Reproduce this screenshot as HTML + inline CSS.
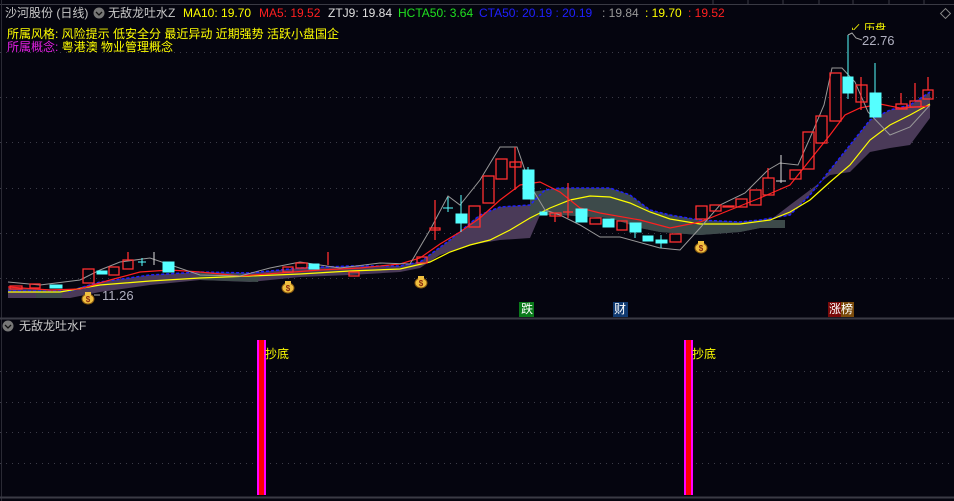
<!DOCTYPE html>
<html><head><meta charset="utf-8"><style>
html,body{margin:0;padding:0;background:#05050f;width:954px;height:501px;overflow:hidden}
.t{position:absolute;font-family:"Liberation Sans","Noto Sans CJK SC",sans-serif;font-size:12px;white-space:nowrap;line-height:15px}
</style></head><body>
<svg width="954" height="501" style="position:absolute;left:0;top:0" xmlns="http://www.w3.org/2000/svg">
<rect width="954" height="501" fill="#05050f"/>
<line x1="0" y1="4.5" x2="954" y2="4.5" stroke="#3a3a44"/>
<g stroke="#3a3a44"><line x1="713" y1="0" x2="713" y2="4"/><line x1="748" y1="0" x2="748" y2="4"/><line x1="783" y1="0" x2="783" y2="4"/><line x1="819" y1="0" x2="819" y2="4"/><line x1="853" y1="0" x2="853" y2="4"/><line x1="889" y1="0" x2="889" y2="4"/><line x1="924" y1="0" x2="924" y2="4"/></g>
<line x1="1.5" y1="0" x2="1.5" y2="501" stroke="#2a2a34"/>
<g stroke="#3c3c48" stroke-dasharray="1,5">
<line x1="0" y1="52.5" x2="954" y2="52.5"/><line x1="0" y1="97.5" x2="954" y2="97.5"/><line x1="0" y1="142.5" x2="954" y2="142.5"/><line x1="0" y1="188.5" x2="954" y2="188.5"/><line x1="0" y1="233.5" x2="954" y2="233.5"/><line x1="0" y1="278.5" x2="954" y2="278.5"/>
<line x1="0" y1="371.5" x2="954" y2="371.5"/><line x1="0" y1="402.5" x2="954" y2="402.5"/><line x1="0" y1="432.5" x2="954" y2="432.5"/><line x1="0" y1="463.5" x2="954" y2="463.5"/>
</g>
<line x1="0" y1="318.5" x2="954" y2="318.5" stroke="#3a3a44" stroke-width="2"/>
<line x1="0" y1="497.5" x2="954" y2="497.5" stroke="#3a3a44" stroke-width="2"/>
<polygon fill="#4a3a58" points="8,288 70,290 100,282 150,275 200,272 250,273 300,268 350,266 400,266 420,262 450,240 480,215 500,207 530,205 545,190 560,188 610,188 630,195 650,210 670,215 700,220 740,222 760,220 790,215 810,195 830,170 850,145 870,120 890,110 910,105 930,92 930,118 910,145 890,148 870,152 850,172 830,175 810,190 790,205 760,228 740,232 700,235 660,232 640,228 610,218 560,215 540,215 530,238 500,240 470,245 440,255 420,268 400,272 350,275 300,277 250,282 200,280 150,285 100,292 70,298 8,298"/>
<polygon fill="#3d4a4a" points="530,192 545,190 560,188 610,188 630,195 650,210 670,215 700,220 740,222 760,220 785,220 785,228 760,228 740,232 700,235 660,232 640,228 610,218 560,215 540,215 530,222"/>
<polygon fill="#3d4a4a" points="36,290 62,290 62,298 36,298"/>
<polygon fill="#3d4a4a" points="195,272 260,274 258,282 200,280"/>
<polyline fill="none" stroke="#2020ff" stroke-dasharray="3,2" stroke-width="1.5" points="8,291 70,291 100,282 150,275 200,272 250,273 300,268 350,266 400,266 420,262 450,240 480,215 500,207 530,205 545,190 560,188 610,188 630,195 650,210 670,215 700,220 740,222 760,220 790,215 810,195 830,170 850,145 870,120 890,110 910,105 930,92"/>
<polyline fill="none" stroke="#ffff00" stroke-width="1.2" points="8,292 60,292 100,285 150,281 200,278 250,276 300,274 350,271 400,269 430,262 450,252 470,245 490,240 510,230 530,218 550,208 570,200 590,196 610,197 630,203 650,212 670,219 700,224 740,224 770,220 790,212 810,200 830,182 850,165 870,140 890,125 910,115 930,104"/>
<polyline fill="none" stroke="#ff2020" stroke-width="1.2" points="8,287 50,290 80,289 110,280 140,272 170,270 200,272 240,276 280,273 320,270 360,268 400,264 420,258 440,244 460,232 480,218 500,200 520,185 540,182 560,192 580,208 600,213 640,220 670,228 700,222 730,210 760,198 790,185 810,160 830,135 845,115 860,108 880,104 900,108 930,106"/>
<polyline fill="none" stroke="#999" stroke-width="1" points="8,282 40,285 80,280 100,270 120,262 150,258 200,275 240,276 270,268 300,262 340,268 380,263 410,264 430,230 448,196 460,205 480,180 500,147 517,147 530,185 545,210 560,215 580,225 600,237 620,237 660,248 680,250 700,228 720,205 745,193 768,170 780,163 798,165 810,138 824,105 832,68 842,68 855,82 868,112 890,135 910,127 930,105"/>
<g fill="none" stroke="#ff3030" stroke-width="1.3">
<rect x="83" y="269" width="11" height="14"/><rect x="109" y="267" width="10" height="8"/><rect x="123" y="260" width="10" height="9"/><line x1="128" y1="252" x2="128" y2="260"/>
<rect x="283" y="267" width="10" height="5"/><rect x="296" y="263" width="11" height="5"/><line x1="328" y1="252" x2="328" y2="265"/><rect x="349" y="272" width="10" height="4"/>
<rect x="10" y="286" width="12" height="3"/><rect x="30" y="284" width="10" height="4"/><rect x="417" y="257" width="10" height="6"/>
<rect x="430" y="228" width="10" height="2"/><line x1="435" y1="200" x2="435" y2="240"/>
<rect x="469" y="206" width="11" height="21"/><rect x="483" y="176" width="11" height="27"/><rect x="496" y="159" width="11" height="20"/><rect x="510" y="162" width="11" height="5"/><line x1="515" y1="147" x2="515" y2="190"/>
<rect x="550" y="213" width="11" height="3"/><line x1="555" y1="213" x2="555" y2="222"/><line x1="568" y1="183" x2="568" y2="218"/><line x1="563" y1="212" x2="573" y2="212"/>
<rect x="590" y="218" width="11" height="6"/><rect x="617" y="221" width="10" height="9"/><rect x="670" y="234" width="11" height="8"/><rect x="696" y="206" width="11" height="13"/>
<rect x="710" y="205" width="11" height="6"/><rect x="723" y="206" width="11" height="1"/><rect x="736" y="199" width="11" height="8"/><rect x="750" y="190" width="11" height="15"/><rect x="763" y="178" width="11" height="17"/><line x1="768" y1="168" x2="768" y2="178"/>
<rect x="790" y="170" width="11" height="9"/><rect x="803" y="132" width="11" height="37"/><rect x="816" y="116" width="11" height="27"/><rect x="830" y="73" width="11" height="48"/><rect x="856" y="85" width="11" height="17"/><line x1="861" y1="77" x2="861" y2="110"/>
<rect x="896" y="104" width="11" height="5"/><line x1="901" y1="93" x2="901" y2="104"/><rect x="910" y="101" width="11" height="6"/><line x1="915" y1="83" x2="915" y2="101"/><rect x="923" y="90" width="10" height="9"/><line x1="928" y1="77" x2="928" y2="90"/>
</g>
<g fill="#55ffff" stroke="#55ffff">
<rect x="97" y="271" width="10" height="3"/><line x1="142" y1="258" x2="142" y2="266"/><line x1="138" y1="262" x2="146" y2="262"/><rect x="163" y="262" width="11" height="10"/>
<rect x="309" y="264" width="10" height="5"/><rect x="50" y="285" width="12" height="3"/>
<line x1="448" y1="197" x2="448" y2="212"/><line x1="443" y1="208" x2="453" y2="208"/>
<rect x="456" y="214" width="11" height="9"/><line x1="461" y1="195" x2="461" y2="232"/>
<rect x="523" y="170" width="11" height="29"/><line x1="528" y1="167" x2="528" y2="170"/>
<rect x="540" y="212" width="7" height="3"/><rect x="576" y="209" width="11" height="13"/><rect x="603" y="219" width="11" height="8"/><rect x="630" y="223" width="11" height="9"/><line x1="635" y1="232" x2="635" y2="238"/>
<rect x="643" y="236" width="10" height="5"/><rect x="656" y="240" width="11" height="3"/><line x1="661" y1="235" x2="661" y2="248"/>
<rect x="843" y="77" width="10" height="16"/><line x1="848" y1="35" x2="848" y2="99"/>
<rect x="870" y="93" width="11" height="24"/><line x1="875" y1="63" x2="875" y2="117"/>
</g>
<g stroke="#ddd"><line x1="154" y1="252" x2="154" y2="265"/><line x1="781" y1="155" x2="781" y2="183"/><line x1="776" y1="181" x2="786" y2="181"/></g>
<polyline fill="none" stroke="#aaa" points="848,35 852,33 856,38 862,40"/>
<g font-family="Liberation Sans" font-size="8" font-weight="bold" text-anchor="middle">
<g transform="translate(88,297)"><ellipse cx="0" cy="2" rx="6" ry="5" fill="#f0c040" stroke="#8a5a10"/><rect x="-3" y="-5" width="6" height="3" fill="#f0c040"/><text x="0" y="5" fill="#8a2a10">$</text></g>
<g transform="translate(288,286)"><ellipse cx="0" cy="2" rx="6" ry="5" fill="#f0c040" stroke="#8a5a10"/><rect x="-3" y="-5" width="6" height="3" fill="#f0c040"/><text x="0" y="5" fill="#8a2a10">$</text></g>
<g transform="translate(421,281)"><ellipse cx="0" cy="2" rx="6" ry="5" fill="#f0c040" stroke="#8a5a10"/><rect x="-3" y="-5" width="6" height="3" fill="#f0c040"/><text x="0" y="5" fill="#8a2a10">$</text></g>
<g transform="translate(701,246)"><ellipse cx="0" cy="2" rx="6" ry="5" fill="#f0c040" stroke="#8a5a10"/><rect x="-3" y="-5" width="6" height="3" fill="#f0c040"/><text x="0" y="5" fill="#8a2a10">$</text></g>
</g>
<line x1="94" y1="295" x2="100" y2="295" stroke="#aaa"/>
<rect x="519" y="302" width="15" height="15" fill="#0a7a1a"/><rect x="613" y="302" width="15" height="15" fill="#103a70"/><rect x="828" y="302" width="13" height="15" fill="#7a0a0a"/><rect x="841" y="302" width="13" height="15" fill="#7a4a0a"/>
<rect x="257" y="340" width="9" height="155" fill="#ff00ff"/><rect x="259" y="340" width="5" height="155" fill="#ff0000"/>
<rect x="684" y="340" width="9" height="155" fill="#ff00ff"/><rect x="686" y="340" width="5" height="155" fill="#ff0000"/>
<circle cx="99" cy="13" r="5.5" fill="#777"/><polyline points="96,12 99,15 102,12" fill="none" stroke="#111" stroke-width="1.3"/>
<circle cx="8" cy="326" r="5.5" fill="#777"/><polyline points="5,325 8,328 11,325" fill="none" stroke="#111" stroke-width="1.3"/>
<rect x="942" y="10" width="7" height="7" fill="none" stroke="#888" transform="rotate(45 945.5 13.5)"/>
</svg>
<div class="t" style="left:5px;top:6px;color:#c8c8c8">沙河股份 (日线)</div>
<div class="t" style="left:108px;top:6px;color:#c8c8c8">无敌龙吐水Z</div>
<div class="t" style="left:183px;top:6px;color:#ffff00">MA10: 19.70</div>
<div class="t" style="left:259px;top:6px;color:#ff2020">MA5: 19.52</div>
<div class="t" style="left:328px;top:6px;color:#e0e0e0">ZTJ9: 19.84</div>
<div class="t" style="left:398px;top:6px;color:#20e020">HCTA50: 3.64</div>
<div class="t" style="left:479px;top:6px;color:#2020ff">CTA50: 20.19 : 20.19</div>
<div class="t" style="left:602px;top:6px;color:#999">: 19.84</div>
<div class="t" style="left:645px;top:6px;color:#ffff00">: 19.70</div>
<div class="t" style="left:688px;top:6px;color:#ff2020">: 19.52</div>
<div class="t" style="left:7px;top:27px;color:#ffff00">所属风格: 风险提示 低安全分 最近异动 近期强势 活跃小盘国企</div>
<div class="t" style="left:7px;top:40px;color:#ffff00"><span style="color:#e020e0">所属概念:</span> 粤港澳 物业管理概念</div>
<div class="t" style="left:850px;top:22px;color:#ffff00;font-size:11px;height:8px;overflow:hidden">↙ 历盘</div>
<div class="t" style="left:862px;top:33px;color:#b0b0c0;font-size:13px">22.76</div>
<div class="t" style="left:102px;top:288px;color:#b0b0c0;font-size:13px">11.26</div>
<div class="t" style="left:521px;top:302px;color:#fff">跌</div>
<div class="t" style="left:614px;top:302px;color:#fff">财</div>
<div class="t" style="left:829px;top:302px;color:#fff">涨榜</div>
<div class="t" style="left:19px;top:319px;color:#c8c8c8">无敌龙吐水F</div>
<div class="t" style="left:265px;top:347px;color:#ffff00">抄底</div>
<div class="t" style="left:692px;top:347px;color:#ffff00">抄底</div>
</body></html>
